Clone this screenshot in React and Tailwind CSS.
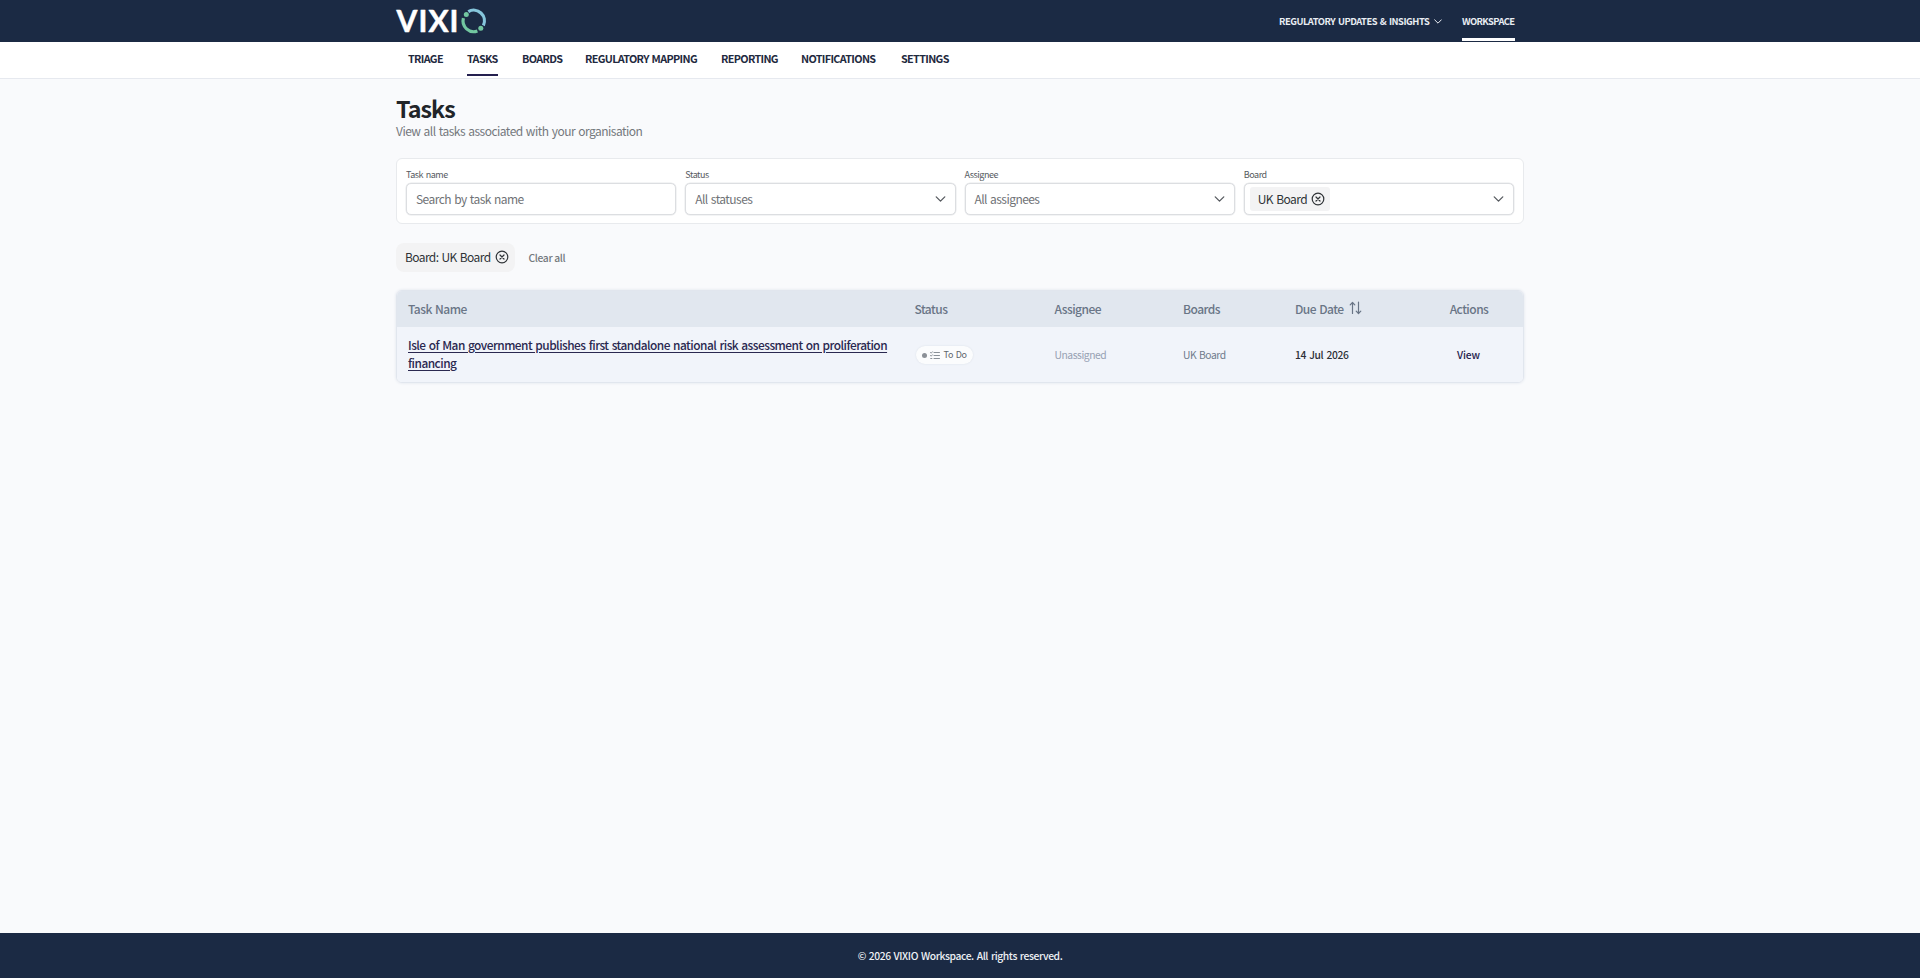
const navItems = [
    { name: "TRIAGE", width: "w-[35px]" },
    { name: "TASKS", width: "w-[31px]", active: true },
    { name: "BOARDS", width: "w-[39px]" },
    { name: "REGULATORY MAPPING", width: "w-[112px]" },
    { name: "REPORTING", width: "w-14" },
    { name: "NOTIFICATIONS", width: "w-[76px]" },
    { name: "SETTINGS", width: "w-12" },
];

const columns = "grid grid-cols-[506.5px_140px_128.5px_112px_131px_108px]";

const tasks = [
    {
        name: "Isle of Man government publishes first standalone national risk assessment on proliferation financing",
        status: "To Do",
        assignee: "Unassigned",
        board: "UK Board",
        due: "14 Jul 2026",
    },
];

function Logo() {
    return (
        <svg width="91" height="35" viewBox="0 -8 91 35" className="block overflow-visible">
            <text
                x="0.5"
                y="24"
                textLength="62"
                lengthAdjust="spacing"
                fill="#ffffff"
                stroke="#ffffff"
                strokeWidth="0.5"
                strokeLinejoin="round"
                fontFamily="Lato, sans-serif"
                fontWeight="700"
                fontSize="30"
            >
                VIXI
            </text>
            <g fill="none" strokeWidth="3.2">
                <path d="M72.3 3.7 A10.7 10.7 0 0 1 87.4 17.5" stroke="#86c6dc" />
                <path d="M67.4 10.2 A10.7 10.7 0 0 0 81.4 23" stroke="#72c6a0" />
            </g>
            <circle cx="70.3" cy="6.6" r="2.5" fill="#72c6a0" />
            <circle cx="84.8" cy="20.3" r="2.5" fill="#72c6a0" />
        </svg>
    );
}

function Chevron({ className }) {
    return (
        <svg viewBox="0 0 12 7" className={className} fill="none" stroke="currentColor" strokeWidth="1.5" strokeLinecap="round" strokeLinejoin="round">
            <path d="M1 1l5 5 5-5" />
        </svg>
    );
}

function CloseCircle() {
    return (
        <svg width="14" height="14" viewBox="0 0 14 14" className="shrink-0" fill="none" stroke="#2f3337" strokeWidth="1.2" strokeLinecap="round">
            <circle cx="7" cy="7" r="5.8" />
            <path d="M5 5l4 4M9 5L5 9" />
        </svg>
    );
}

function SortIcon() {
    return (
        <svg width="13" height="14" viewBox="0 0 13 14" className="-mt-0.5 ml-[5px]" fill="none" stroke="currentColor" strokeWidth="1.2" strokeLinecap="round" strokeLinejoin="round">
            <path d="M3.5 12.5V1.5M1.2 3.8l2.3-2.3 2.3 2.3" />
            <path d="M9.5 1v11.5M7.2 10.2l2.3 2.3 2.3-2.3" />
        </svg>
    );
}

function ListIcon() {
    return (
        <svg width="10" height="9" viewBox="0 0 10 9" fill="none" stroke="#7d848c" strokeWidth="0.9" strokeLinecap="round" strokeLinejoin="round">
            <path d="M4 1.5h5.5M4 4.5h5.5M4 7.5h5.5" />
            <path d="M.5 1.5l.7.7L2.4.8M.5 4.5l.7.7 1.2-1.4M.7 7.5h1.2" />
        </svg>
    );
}

function Field({ label, children }) {
    return (
        <div className="flex-1">
            <div className="h-3.5 text-[9px] leading-[15px] tracking-[-0.46px] text-[#55595e]">{label}</div>
            <div className="mt-0.5 flex h-8 items-center rounded-[5px] border border-[#dcdee1] bg-white px-[9px] text-[12px] tracking-[-0.55px] text-[#6f7276] shadow-[0_0_0_0.5px_#e8e9eb]">
                {children}
            </div>
        </div>
    );
}

export default function App() {
    return (
        <div className="flex h-screen flex-col bg-[#f9fafc] font-['Noto_Sans_CJK_SC',sans-serif] text-[#212529] [word-spacing:1px]">
            {/* Top bar */}
            <header className="h-[42px] shrink-0 bg-[#1b2a44]">
                <div className="mx-auto flex h-full w-[1128px] justify-between">
                    <Logo />
                    <div className="flex pt-[7px] pr-[9px] text-[9.4px] font-bold tracking-[-0.48px] whitespace-nowrap text-[#e9edf3]">
                        <div className="flex h-7 items-center">
                            <span className="w-[151px]">REGULATORY UPDATES &amp; INSIGHTS</span>
                            <Chevron className="ml-1 h-[5px] w-2" />
                        </div>
                        <div className="ml-5 flex h-[34px] w-[53px] flex-col border-b-[3px] border-white">
                            <span className="h-7 leading-7 tracking-[-0.6px]">WORKSPACE</span>
                        </div>
                    </div>
                </div>
            </header>

            {/* Section tabs */}
            <nav className="h-[37px] shrink-0 border-b border-[#e6e9ef] bg-white">
                <div className="mx-auto flex w-[1128px] gap-6 pl-3 text-[10.8px] font-bold tracking-[-0.65px] whitespace-nowrap text-[#1f2a40]">
                    {navItems.map((item) => (
                        <a
                            key={item.name}
                            className={`h-[34px] leading-8 ${item.width} ${item.active ? "border-b-2 border-[#24204f]" : ""}`}
                        >
                            {item.name}
                        </a>
                    ))}
                </div>
            </nav>

            {/* Main content */}
            <main className="mx-auto w-[1128px] flex-1">
                <h1 className="mt-3.5 h-[30px] text-[23.3px] leading-[30px] font-bold tracking-[-1px]">Tasks</h1>
                <p className="mt-px h-[17px] text-[12px] leading-[14px] tracking-[-0.52px] text-[#74787d]">View all tasks associated with your organisation</p>

                <section className="mt-[17px] flex h-[66px] gap-[9px] rounded-md border border-[#e8eaed] bg-white px-[9px] pt-2">
                    <Field label="Task name">Search by task name</Field>
                    <Field label="Status">
                        All statuses
                        <Chevron className="ml-auto h-1.5 w-[11px] text-[#55595e]" />
                    </Field>
                    <Field label="Assignee">
                        All assignees
                        <Chevron className="ml-auto h-1.5 w-[11px] text-[#55595e]" />
                    </Field>
                    <Field label="Board">
                        <div className="-ml-1 flex h-6 w-20 items-center justify-between rounded-[3px] bg-[#f3f3f4] pr-[5px] pl-2 text-[#2f3337]">
                            UK Board
                            <CloseCircle />
                        </div>
                        <Chevron className="ml-auto h-1.5 w-[11px] text-[#55595e]" />
                    </Field>
                </section>

                <div className="mt-[19px] flex h-[29px] items-center">
                    <div className="flex h-[29px] w-[119px] items-center rounded-lg bg-[#f3f3f4] pb-px pl-[9px] text-[12px] tracking-[-0.6px] whitespace-nowrap text-[#2f3337]">
                        <span className="mr-[5px] w-[85px]">Board: UK Board</span>
                        <CloseCircle />
                    </div>
                    <button className="ml-[13.5px] pt-px text-[10.3px] font-medium tracking-[-0.35px] text-[#74787d]">Clear all</button>
                </div>

                <section className="mt-[18px] overflow-hidden rounded-md border border-[#e1e6ee] shadow-[0_0_3px_#dde2ea]">
                    <div className={`${columns} h-9 items-center bg-[#e1e7ef] pb-px text-[12px] font-medium tracking-[-0.53px] text-[#697586]`}>
                        <span className="pl-[11px]">Task Name</span>
                        <span className="pl-[11px]">Status</span>
                        <span className="pl-[11px]">Assignee</span>
                        <span className="pl-[11px]">Boards</span>
                        <span className="flex items-center pl-[11px]">
                            Due Date
                            <SortIcon />
                        </span>
                        <span className="text-center">Actions</span>
                    </div>
                    {tasks.map((task) => (
                        <div key={task.name} className={`${columns} h-[55px] items-center bg-[#f1f4fa] pt-px text-[10.3px] tracking-[-0.45px]`}>
                            <a className="pr-3 pb-[3px] pl-[11px] text-[11.9px] leading-[18px] font-medium tracking-[-0.52px] text-[#2a2850] underline underline-offset-2">
                                {task.name}
                            </a>
                            <span className="flex pl-3">
                                <span className="flex h-[18px] items-center rounded-full bg-[#fbfcfd] px-1.5 text-[9px] tracking-[-0.35px] text-[#5f656c] shadow-[0_0_2px_#d9dee6]">
                                    <i className="mr-[3px] size-[5px] rounded-full bg-[#8b9097]" />
                                    <ListIcon />
                                    <span className="ml-1">{task.status}</span>
                                </span>
                            </span>
                            <span className="pl-[11px] text-[#97a1b3]">{task.assignee}</span>
                            <span className="pl-[11px] text-[#6f7b8c]">{task.board}</span>
                            <span className="pl-[11px] font-medium tracking-[-0.3px] text-[#2c3036]">{task.due}</span>
                            <a className="pr-px text-center font-medium tracking-[-0.15px] text-[#25224d]">View</a>
                        </div>
                    ))}
                </section>
            </main>

            <footer className="flex h-[45px] shrink-0 items-center justify-center bg-[#1b2a44] text-[10.3px] font-medium tracking-[-0.4px] text-[#eef1f5]">
                © 2026 VIXIO Workspace. All rights reserved.
            </footer>
        </div>
    );
}
